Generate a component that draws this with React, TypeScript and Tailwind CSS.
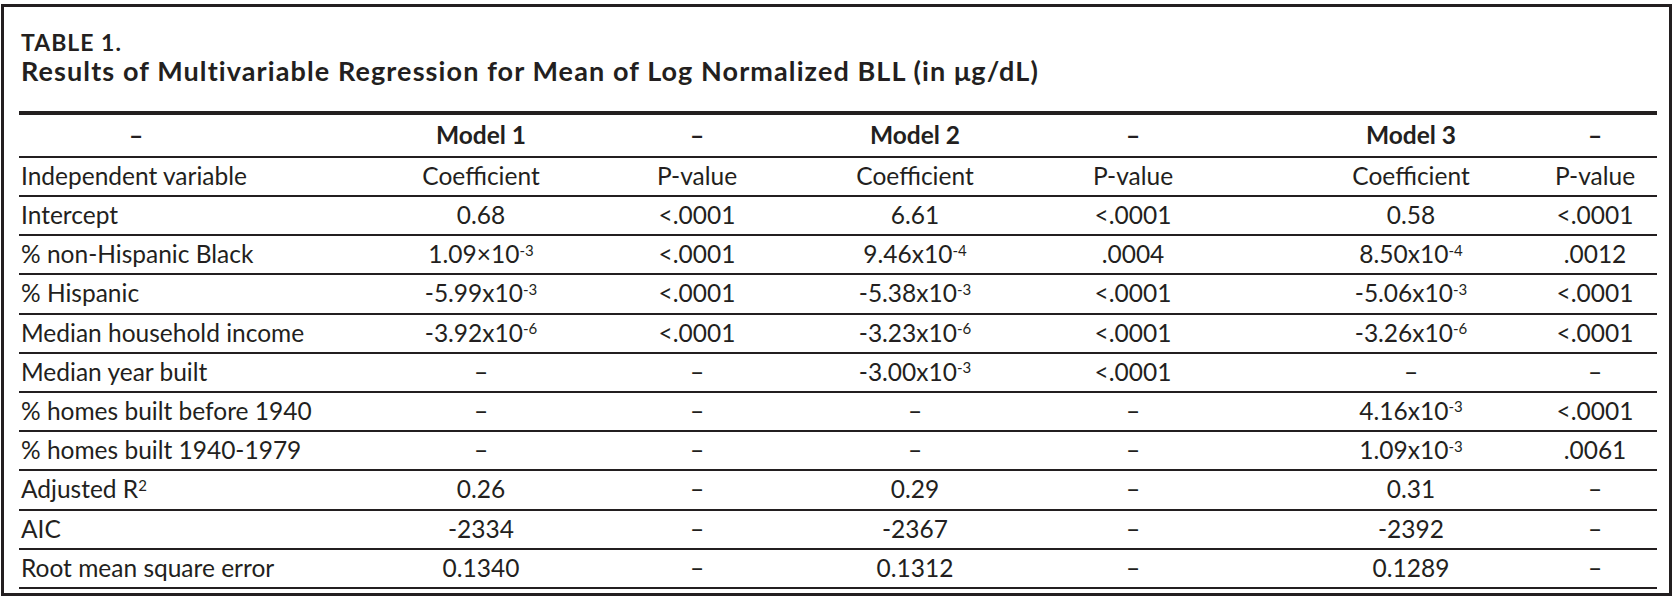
import React from 'react';

type Cell = React.ReactNode;

const Sci = ({ base, exp }: { base: string; exp: string }) => (
  <span>
    {base}
    <sup className="text-[15px]">{exp}</sup>
  </span>
);

// per column alignment offsets so each cell centre lands on the printed column centre
const colPad = ['pr-[55px]', 'pl-[66px]', '', '', 'pr-[31px]', 'pl-[46px]', 'pl-[30px]'];

const D = '–';

const rows: { label: Cell; cells: Cell[] }[] = [
  { label: 'Intercept', cells: ['0.68', '<.0001', '6.61', '<.0001', '0.58', '<.0001'] },
  {
    label: '% non-Hispanic Black',
    cells: [
      <Sci base="1.09×10" exp="-3" />,
      '<.0001',
      <Sci base="9.46x10" exp="-4" />,
      '.0004',
      <Sci base="8.50x10" exp="-4" />,
      '.0012',
    ],
  },
  {
    label: '% Hispanic',
    cells: [
      <Sci base="-5.99x10" exp="-3" />,
      '<.0001',
      <Sci base="-5.38x10" exp="-3" />,
      '<.0001',
      <Sci base="-5.06x10" exp="-3" />,
      '<.0001',
    ],
  },
  {
    label: 'Median household income',
    cells: [
      <Sci base="-3.92x10" exp="-6" />,
      '<.0001',
      <Sci base="-3.23x10" exp="-6" />,
      '<.0001',
      <Sci base="-3.26x10" exp="-6" />,
      '<.0001',
    ],
  },
  { label: 'Median year built', cells: [D, D, <Sci base="-3.00x10" exp="-3" />, '<.0001', D, D] },
  { label: '% homes built before 1940', cells: [D, D, D, D, <Sci base="4.16x10" exp="-3" />, '<.0001'] },
  { label: '% homes built 1940-1979', cells: [D, D, D, D, <Sci base="1.09x10" exp="-3" />, '.0061'] },
  {
    label: (
      <span>
        Adjusted R<sup className="text-[15px]">2</sup>
      </span>
    ),
    cells: ['0.26', D, '0.29', D, '0.31', D],
  },
  { label: 'AIC', cells: ['-2334', D, '-2367', D, '-2392', D] },
  { label: 'Root mean square error', cells: ['0.1340', D, '0.1312', D, '0.1289', D] },
];

const gridCols = 'grid grid-cols-[289px_280px_218px_218px_249px_230px_154px]';

export default function App() {
  return (
    <div className="bg-white w-[1676px] h-[599px] pt-[4px] pl-[1px] text-[#231f20]" style={{ fontFamily: 'Lato, "Open Sans", sans-serif' }}>
      <div className="w-[1671px] h-[592px] border-[3px] border-[#231f20] pt-[22px] pl-[15px]">
        <div className="text-[23px] leading-[26px] font-bold tracking-[1px] pl-[2px]">TABLE 1.</div>
        <div className="mt-[1px] text-[27px] leading-[30px] font-bold tracking-[1.1px] pl-[2px]">
          Results of Multivariable Regression for Mean of Log Normalized BLL (in μg/dL)
        </div>

        <div className="mt-[25px] w-[1638px] border-t-4 border-[#231f20] text-[24.5px]">
          {/* model header row */}
          <div className={`${gridCols} h-[43px] border-b-2 border-[#231f20] items-center font-bold`}>
            <div className={`text-center ${colPad[0]}`}>{D}</div>
            <div className={`text-center ${colPad[1]}`}>Model 1</div>
            <div className={`text-center ${colPad[2]}`}>{D}</div>
            <div className={`text-center ${colPad[3]}`}>Model 2</div>
            <div className={`text-center ${colPad[4]}`}>{D}</div>
            <div className={`text-center ${colPad[5]}`}>Model 3</div>
            <div className={`text-center ${colPad[6]}`}>{D}</div>
          </div>
          <div className={`${gridCols} h-[39px] border-b-2 border-[#231f20] items-center pb-[6px]`}>
            <div className="pl-[2px] whitespace-nowrap">Independent variable</div>
            {['Coefficient', 'P-value', 'Coefficient', 'P-value', 'Coefficient', 'P-value'].map((h, i) => (
              <div key={i} className={`text-center ${colPad[i + 1]}`}>{h}</div>
            ))}
          </div>
          {rows.map((r, ri) => (
            <div key={ri} className={`${gridCols} h-[39.2px] border-b-2 border-[#231f20] items-center pb-[6px]`}>
              <div className="pl-[2px] whitespace-nowrap">{r.label}</div>
              {r.cells.map((c, i) => (
                <div key={i} className={`text-center whitespace-nowrap ${colPad[i + 1]}`}>{c}</div>
              ))}
            </div>
          ))}
        </div>
      </div>
    </div>
  );
}
